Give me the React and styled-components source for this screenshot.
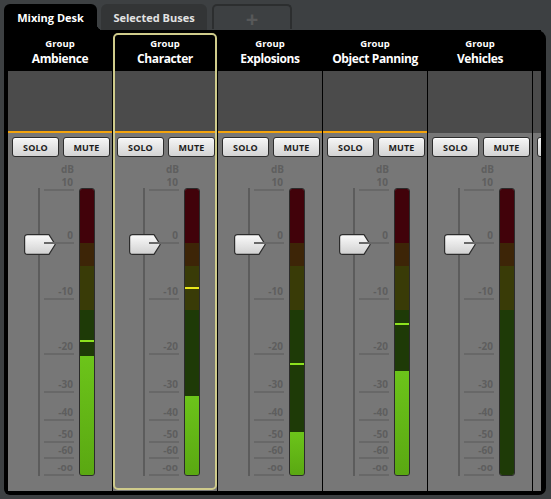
import React from 'react';
import styled, { createGlobalStyle, css } from 'styled-components';

const GlobalStyle = createGlobalStyle`
  html, body { margin: 0; padding: 0; background: #3d4042; }
  body { width: 551px; height: 499px; overflow: hidden; font-family: "Open Sans", "DejaVu Sans", sans-serif; }
  * { box-sizing: border-box; }
`;

const Page = styled.div`
  padding: 4px 5px 4px 4px;
  display: flex;
  flex-direction: column;
`;

const TabRow = styled.div`
  display: flex;
  align-items: flex-end;
  gap: 4px;
  height: 26px;
`;

const Tab = styled.div`
  position: relative;
  height: 26px;
  width: ${(p) => p.$w}px;
  margin-right: ${(p) => p.$mr || 0}px;
  border-radius: 6px 6px 0 0;
  display: flex;
  align-items: center;
  justify-content: center;
  font-weight: 700;
  font-size: 11px;
  padding-top: 1px;
  color: ${(p) => (p.$active ? '#ffffff' : '#e2e2e2')};
  background: ${(p) => (p.$active ? '#000' : '#333536')};
  ${(p) =>
    p.$active &&
    css`
      &::after {
        content: '';
        position: absolute;
        right: -6px;
        bottom: 0;
        width: 6px;
        height: 6px;
        background: radial-gradient(circle at 100% 0, transparent 6px, #000 6.5px);
      }
    `}
`;

const AddTab = styled.div`
  height: 25px;
  width: 80px;
  margin-bottom: 1px;
  border: 2px solid #2c2e2f;
  border-bottom: none;
  border-radius: 5px 5px 0 0;
  display: flex;
  align-items: center;
  justify-content: center;
  color: #575859;
  font-weight: 700;
  font-size: 22px;
  line-height: 1;
`;

const Panel = styled.div`
  background: #000;
  width: 542px;
  height: 465px;
  border-radius: 0 9px 7px 6px;
  padding: 0 5px 4px 4px;
`;

const StripRow = styled.div`
  display: flex;
  gap: 1px;
  height: 100%;
  overflow: hidden;
`;

const Strip = styled.div`
  position: relative;
  flex: 0 0 104px;
  width: 104px;
  display: flex;
  flex-direction: column;
  ${(p) =>
    p.$selected &&
    css`
      &::after {
        content: '';
        position: absolute;
        top: 3px;
        left: 0;
        right: 0;
        bottom: 1px;
        border: 2px solid #cfcb8b;
        border-radius: 5px;
        pointer-events: none;
      }
    `}
`;

const Header = styled.div`
  height: 41px;
  background: #000;
  display: flex;
  flex-direction: column;
  align-items: center;
  padding-top: 8px;
  color: #fff;
  font-weight: 700;
  white-space: nowrap;
`;

const GroupLabel = styled.div`
  font-size: 9.5px;
  line-height: 12px;
`;

const StripName = styled.div`
  margin-top: 1px;
  font-size: 12px;
  line-height: 16px;
  letter-spacing: -0.4px;
`;

const InsertArea = styled.div`
  height: 62px;
  background: #4b4b4b;
  border-bottom: 2px solid ${(p) => (p.$orange ? '#f3a30c' : '#4b4b4b')};
`;

const Lower = styled.div`
  flex: 1;
  background: #777777;
  padding: 4px 2px 0 4px;
  display: flex;
  flex-direction: column;
`;

const ButtonRow = styled.div`
  display: flex;
  gap: 4px;
`;

const ToggleButton = styled.div`
  width: 47px;
  height: 20px;
  border: 1px solid #2c2c2c;
  border-radius: 3px;
  background: linear-gradient(#f6f6f6, #d3d3d3);
  box-shadow: inset 0 1px 0 #ffffff;
  display: flex;
  align-items: center;
  justify-content: center;
  font-weight: 700;
  font-size: 9px;
  color: #1c1c1c;
  letter-spacing: 0.1px;
`;

const UnitLabel = styled.div`
  width: 62px;
  margin-top: 6px;
  text-align: right;
  font-weight: 700;
  font-size: 10px;
  line-height: 12px;
  color: #5e5e5e;
`;

const FaderBody = styled.div`
  margin-top: 13px;
  height: 288px;
  display: flex;
`;

const TrackCol = styled.div`
  position: relative;
  width: 32px;
  display: flex;
  justify-content: flex-end;
  padding-right: 4px;
`;

const TrackLine = styled.div`
  width: 2px;
  background: #5c5c5c;
`;

const Handle = styled.svg`
  position: absolute;
  left: 12px;
  top: ${(p) => p.$top}px;
`;

const ScaleCol = styled.div`
  position: relative;
  width: 30px;
`;

const Tick = styled.div`
  position: absolute;
  left: 0;
  width: 30px;
  height: 2px;
  background: #686868;
  top: ${(p) => p.$y - 1}px;
`;

const TickLabel = styled.div`
  position: absolute;
  right: 1px;
  bottom: ${(p) => 288 - p.$y + 3}px;
  font-weight: 700;
  font-size: 10px;
  line-height: 10px;
  color: #5e5e5e;
  white-space: nowrap;
`;

const Meter = styled.div`
  position: relative;
  margin-left: 5px;
  width: 16px;
  height: 288px;
  border: 1px solid #2b2b2b;
  border-radius: 3px;
  overflow: hidden;
  display: flex;
  flex-direction: column;
`;

const Segment = styled.div`
  flex: ${(p) => (p.$h ? `0 0 ${p.$h}px` : '1')};
  background: ${(p) => p.$c};
`;

const LitFill = styled.div`
  position: absolute;
  left: 0;
  right: 0;
  bottom: 0;
  background: linear-gradient(#6cc41a, #5aa812);
`;

const PeakMark = styled.div`
  position: absolute;
  left: 0;
  right: 0;
  height: 2px;
  background: ${(p) => p.$c};
`;

const SCALE = [
  { label: '10', y: 2 },
  { label: '0', y: 55 },
  { label: '-10', y: 111 },
  { label: '-20', y: 166 },
  { label: '-30', y: 204 },
  { label: '-40', y: 232 },
  { label: '-50', y: 254 },
  { label: '-60', y: 270 },
  { label: '-oo', y: 287 },
];

const SEGMENTS = [
  { h: 54, c: '#41020a' },
  { h: 23, c: '#3d2507' },
  { h: 44, c: '#393b07' },
  { h: 0, c: '#1e3a07' },
];

const STRIPS = [
  { name: 'Ambience', orange: true, level: 168, peak: 153, peakColor: '#8de21e' },
  { name: 'Character', orange: true, selected: true, level: 208, peak: 100, peakColor: '#e8e61c' },
  { name: 'Explosions', orange: true, level: 244, peak: 176, peakColor: '#8de21e' },
  { name: 'Object Panning', orange: true, level: 183, peak: 136, peakColor: '#8de21e' },
  { name: 'Vehicles', orange: false, level: null, peak: null },
  { stub: true, orange: false },
];

function FaderHandle({ id }) {
  return (
    <Handle $top={46} width="32" height="21" viewBox="0 0 32 21">
      <defs>
        <linearGradient id={id} x1="0" y1="0" x2="0" y2="1">
          <stop offset="0" stopColor="#fbfbfb" />
          <stop offset="1" stopColor="#d0d0d0" />
        </linearGradient>
      </defs>
      <path
        d="M3.5 0.6 H25 L31.2 10.5 L25 20.4 H3.5 Q0.6 20.4 0.6 17.5 V3.5 Q0.6 0.6 3.5 0.6 Z"
        fill={`url(#${id})`}
        stroke="#2c2c2c"
        strokeWidth="1.2"
        strokeLinejoin="round"
      />
    </Handle>
  );
}

function ChannelStrip({ strip, index }) {
  if (strip.stub) {
    return (
      <Strip>
        <Header />
        <InsertArea $orange={false} />
        <Lower>
          <ButtonRow>
            <ToggleButton />
            <ToggleButton />
          </ButtonRow>
        </Lower>
      </Strip>
    );
  }
  return (
    <Strip $selected={strip.selected}>
      <Header>
        <GroupLabel>Group</GroupLabel>
        <StripName>{strip.name}</StripName>
      </Header>
      <InsertArea $orange={strip.orange} />
      <Lower>
        <ButtonRow>
          <ToggleButton>SOLO</ToggleButton>
          <ToggleButton>MUTE</ToggleButton>
        </ButtonRow>
        <UnitLabel>dB</UnitLabel>
        <FaderBody>
          <TrackCol>
            <TrackLine />
            <FaderHandle id={`hg${index}`} />
          </TrackCol>
          <ScaleCol>
            {SCALE.map((s) => (
              <React.Fragment key={s.label}>
                <TickLabel $y={s.y}>{s.label}</TickLabel>
                <Tick $y={s.y} />
              </React.Fragment>
            ))}
          </ScaleCol>
          <Meter>
            {SEGMENTS.map((seg, i) => (
              <Segment key={i} $h={seg.h} $c={seg.c} />
            ))}
            {strip.level != null && <LitFill style={{ top: strip.level - 1 }} />}
            {strip.peak != null && <PeakMark $c={strip.peakColor} style={{ top: strip.peak - 2 }} />}
          </Meter>
        </FaderBody>
      </Lower>
    </Strip>
  );
}

export default function App() {
  return (
    <>
      <GlobalStyle />
      <Page>
        <TabRow>
          <Tab $active $w={93}>Mixing Desk</Tab>
          <Tab $w={106} $mr={1}>Selected Buses</Tab>
          <AddTab>+</AddTab>
        </TabRow>
        <Panel>
          <StripRow>
            {STRIPS.map((s, i) => (
              <ChannelStrip key={i} strip={s} index={i} />
            ))}
          </StripRow>
        </Panel>
      </Page>
    </>
  );
}
